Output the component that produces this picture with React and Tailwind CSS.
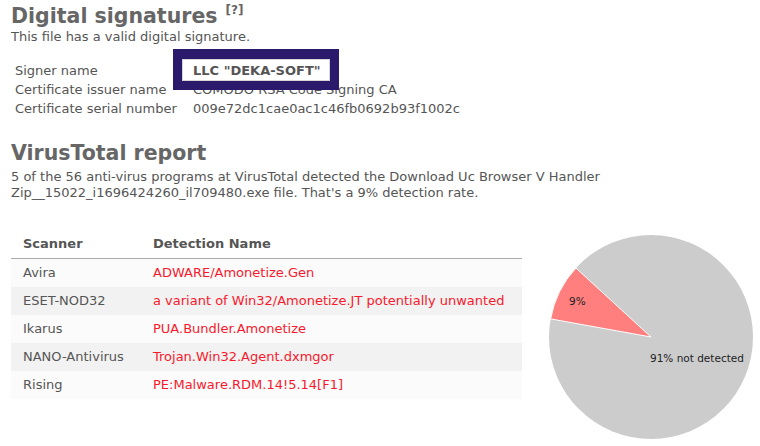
import React from 'react';

const rows = [
  { scanner: 'Avira', name: 'ADWARE/Amonetize.Gen' },
  { scanner: 'ESET-NOD32', name: 'a variant of Win32/Amonetize.JT potentially unwanted' },
  { scanner: 'Ikarus', name: 'PUA.Bundler.Amonetize' },
  { scanner: 'NANO-Antivirus', name: 'Trojan.Win32.Agent.dxmgor' },
  { scanner: 'Rising', name: 'PE:Malware.RDM.14!5.14[F1]' },
];

export default function App() {
  return (
    <div className="relative w-[760px] h-[446px] overflow-hidden bg-white pl-[11px] text-[13px] text-[#555] font-['DejaVu_Sans',Verdana,sans-serif]">
      {/* Digital signatures */}
      <h2 className="mt-[3px] flex items-start text-[20.5px] leading-[26px] font-bold text-[#666]">
        <span>Digital signatures</span>
        <span className="ml-[8px] mt-[-1px] text-[12px] leading-[16px]">[?]</span>
      </h2>
      <p className="leading-[16px]">This file has a valid digital signature.</p>

      <div className="mt-[16px] pl-[4px]">
        <div className="flex h-[19px] items-center">
          <span className="w-[178px]">Signer name</span>
          <span className="font-bold">LLC "DEKA-SOFT"</span>
        </div>
        <div className="flex h-[19px] items-center">
          <span className="w-[178px]">Certificate issuer name</span>
          <span>COMODO RSA Code Signing CA</span>
        </div>
        <div className="flex h-[19px] items-center">
          <span className="w-[178px]">Certificate serial number</span>
          <span>009e72dc1cae0ac1c46fb0692b93f1002c</span>
        </div>
      </div>

      {/* highlight box over signer name */}
      <div className="absolute left-[173px] top-[49px] w-[166px] h-[41px] border-[9px] border-t-[10px] border-[#2b1a6c]">
        <div className="w-full h-full border border-[#d6d6d6]" />
      </div>

      {/* VirusTotal report */}
      <h2 className="mt-[22px] text-[20.5px] leading-[26px] font-bold text-[#666]">VirusTotal report</h2>
      <p className="mt-[3px] leading-[16px] w-[620px]">
        5 of the 56 anti-virus programs at VirusTotal detected the Download Uc Browser V Handler
        <br />
        Zip__15022_i1696424260_il709480.exe file. That's a 9% detection rate.
      </p>

      <div className="mt-[19px] flex items-start">
        <div className="mt-[10px] w-[511px]">
          <div className="flex h-[29px] items-center border-b border-[#aaa] font-bold">
            <span className="w-[142px] pl-[12px]">Scanner</span>
            <span>Detection Name</span>
          </div>
          {rows.map((r, i) => (
            <div
              key={r.scanner}
              className={`flex h-[28px] items-center ${i % 2 === 1 ? 'bg-[#f2f2f2]' : 'bg-[#fbfbfb]'}`}
            >
              <span className="w-[142px] pl-[12px]">{r.scanner}</span>
              <span className="text-[#f8192c]">{r.name}</span>
            </div>
          ))}
        </div>

        <svg width="230" height="226" className="ml-[8px]" viewBox="0 0 230 226">
          <circle cx="121" cy="117" r="102" fill="#cccccc" />
          <path
            d="M121 117 L20.6 98.9 A102 102 0 0 1 45.9 48 Z"
            fill="#ff7f7f"
            stroke="#ffffff"
            strokeWidth="1"
          />
          <text x="39" y="85" fontSize="10.5" fill="#222" fontFamily="DejaVu Sans, sans-serif">9%</text>
          <text x="120" y="142" fontSize="10.5" fill="#222" fontFamily="DejaVu Sans, sans-serif">91% not detected</text>
        </svg>
      </div>
    </div>
  );
}
